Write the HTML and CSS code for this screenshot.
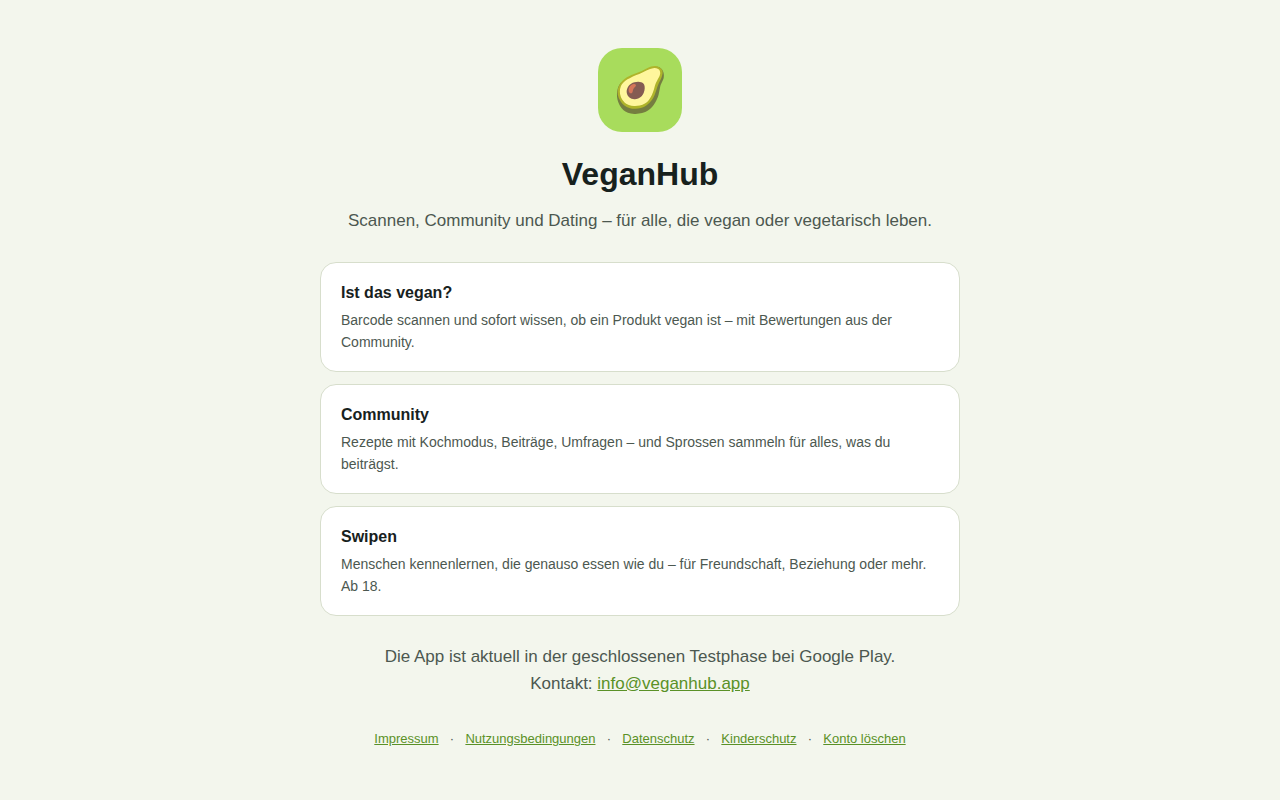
FILE: index.html
```html
<!DOCTYPE html>
<html lang="de">
<head>
<meta charset="utf-8">
<meta name="viewport" content="width=device-width, initial-scale=1">
<title>VeganHub</title>
<link rel="stylesheet" href="styles.css">
</head>
<body>
<main class="page">
  <div class="logo">🥑</div>
  <h1 class="title">VeganHub</h1>
  <p class="lead">Scannen, Community und Dating – für alle, die vegan oder vegetarisch leben.</p>
  <div class="cards">
    <section class="card">
      <h2 class="card-title">Ist das vegan?</h2>
      <p class="card-text">Barcode scannen und sofort wissen, ob ein Produkt vegan ist – mit Bewertungen aus der Community.</p>
    </section>
    <section class="card">
      <h2 class="card-title">Community</h2>
      <p class="card-text">Rezepte mit Kochmodus, Beiträge, Umfragen – und Sprossen sammeln für alles, was du beiträgst.</p>
    </section>
    <section class="card">
      <h2 class="card-title">Swipen</h2>
      <p class="card-text">Menschen kennenlernen, die genauso essen wie du – für Freundschaft, Beziehung oder mehr. Ab 18.</p>
    </section>
  </div>
  <p class="contact">Die App ist aktuell in der geschlossenen Testphase bei Google Play.<br>Kontakt: <a class="link" href="mailto:info@veganhub.app">info@veganhub.app</a></p>
  <footer class="footer">
    <a class="link" href="#">Impressum</a> &nbsp;·&nbsp;
    <a class="link" href="#">Nutzungsbedingungen</a> &nbsp;·&nbsp;
    <a class="link" href="#">Datenschutz</a> &nbsp;·&nbsp;
    <a class="link" href="#">Kinderschutz</a> &nbsp;·&nbsp;
    <a class="link" href="#">Konto löschen</a>
  </footer>
</main>
</body>
</html>
```
FILE: styles.css
```css
* { box-sizing: border-box; }

body {
  margin: 0;
  background: #f3f6ed;
  color: #4c5850;
  font-family: "Liberation Sans", Arial, sans-serif;
  font-size: 17px;
  line-height: 27px;
}

.page {
  max-width: 680px;
  margin: 0 auto;
  padding: 48px 20px;
  text-align: center;
}

.logo {
  display: flex;
  align-items: center;
  justify-content: center;
  width: 84px;
  height: 84px;
  margin: 0 auto 20px;
  border-radius: 24px;
  background: #a8dc5c;
  font-size: 44px;
  line-height: 70px;
}

.title {
  margin: 0 0 10px;
  color: #17211d;
  font-size: 32px;
  line-height: 45px;
}

.lead { margin: 0 0 28px; }

.cards { display: grid; gap: 12px; }

.card {
  padding: 17px 20px 18px;
  border: 1px solid #d7decc;
  border-radius: 16px;
  background: #fff;
  text-align: left;
}

.card-title {
  margin: 0 0 3px;
  color: #17211d;
  font-size: 16px;
  line-height: 26px;
}

.card-text {
  margin: 0;
  font-size: 14px;
  line-height: 22px;
}

.contact { margin: 27px 0 31px; }

.link { color: #5a9127; }

.footer {
  font-size: 13px;
  line-height: 21px;
}

.footer .link { margin: 0 4px; }
```
